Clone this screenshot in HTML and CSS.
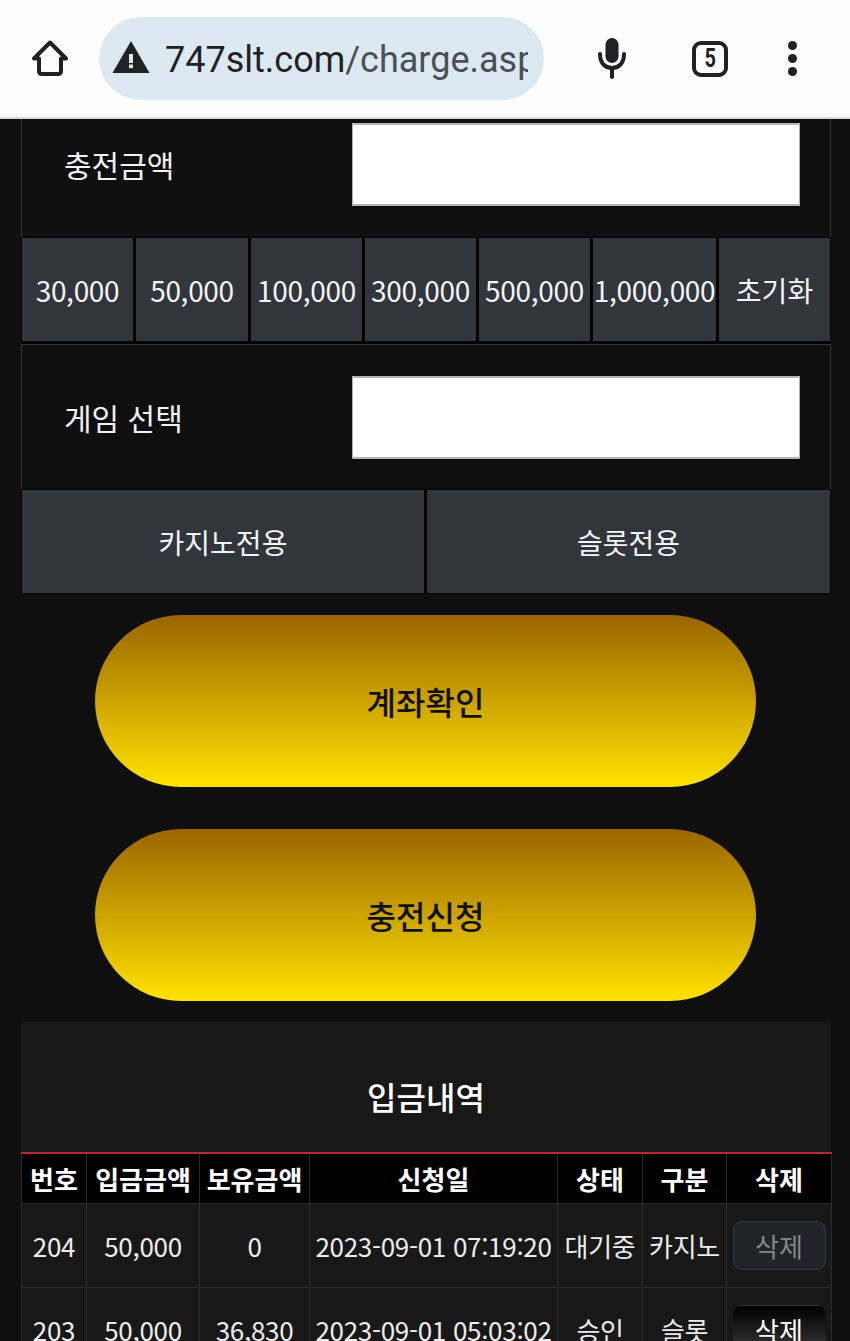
FILE: index.html
```html
<!DOCTYPE html>
<html lang="ko">
<head>
    <meta charset="utf-8">
    <title>747slt.com/charge.asp</title>
    <link rel="stylesheet" href="styles.css">
</head>
<body>
    <header class="toolbar">
        <svg class="icon-home" width="38" height="37" viewBox="0 0 38 37">
            <path d="M8 18.5 H3 L19 2.5 L35 18.5 H30 V31 Q30 34 27 34 H11 Q8 34 8 31 Z" fill="none" stroke="#202124" stroke-width="4" stroke-linejoin="round"/>
        </svg>
        <div class="omnibox">
            <svg class="icon-warn" width="38" height="32" viewBox="0 0 38 32">
                <path d="M19 0 L37.5 32 H0.5 Z" fill="#202124"/>
                <rect x="17" y="13" width="4" height="9" fill="#dce9f1"/>
                <rect x="17" y="23.5" width="4" height="3.6" fill="#dce9f1"/>
            </svg>
            <div class="url"><span class="url-host">747slt.com</span>/charge.aspx</div>
        </div>
        <svg class="icon-mic" width="28" height="41" viewBox="0 0 28 41">
            <rect x="7.5" y="0" width="13" height="25" rx="6.5" fill="#202124"/>
            <path d="M2 16 C2 26 8 30 14 30 C20 30 26 26 26 16" fill="none" stroke="#202124" stroke-width="4" stroke-linecap="round"/>
            <rect x="12" y="29" width="4" height="12" rx="2" fill="#202124"/>
        </svg>
        <div class="tabs"><span class="tabs-num">5</span></div>
        <div class="dots"><i></i><i></i><i></i></div>
    </header>

    <form class="charge">
        <div class="field field-first">
            <label class="field-label">충전금액</label>
            <input class="field-input" type="text">
        </div>
        <div class="amounts">
            <button type="button" class="pick pick-num">30,000</button>
            <button type="button" class="pick pick-num">50,000</button>
            <button type="button" class="pick pick-num">100,000</button>
            <button type="button" class="pick pick-num">300,000</button>
            <button type="button" class="pick pick-num">500,000</button>
            <button type="button" class="pick pick-num">1,000,000</button>
            <button type="button" class="pick">초기화</button>
        </div>
        <div class="field">
            <label class="field-label">게임 선택</label>
            <input class="field-input" type="text">
        </div>
        <div class="games">
            <button type="button" class="pick">카지노전용</button>
            <button type="button" class="pick">슬롯전용</button>
        </div>
        <button type="button" class="gold">계좌확인</button>
        <button type="button" class="gold">충전신청</button>
    </form>

    <section class="history">
        <h2 class="history-title">입금내역</h2>
        <table class="history-table">
            <colgroup>
                <col class="c-no"><col class="c-amount"><col class="c-balance"><col class="c-date"><col class="c-state"><col class="c-type"><col class="c-del">
            </colgroup>
            <thead>
                <tr><th>번호</th><th>입금금액</th><th>보유금액</th><th>신청일</th><th>상태</th><th>구분</th><th>삭제</th></tr>
            </thead>
            <tbody>
                <tr>
                    <td>204</td><td>50,000</td><td>0</td><td>2023-09-01 07:19:20</td><td>대기중</td><td>카지노</td>
                    <td><button type="button" class="del del-off">삭제</button></td>
                </tr>
                <tr>
                    <td>203</td><td>50,000</td><td>36,830</td><td>2023-09-01 05:03:02</td><td>승인</td><td>슬롯</td>
                    <td><button type="button" class="del">삭제</button></td>
                </tr>
            </tbody>
        </table>
    </section>
</body>
</html>
```

FILE: styles.css
```css
* {
    box-sizing: border-box;
}

html, body {
    height: 100%;
}

body {
    margin: 0;
    height: 1341px;
    overflow: hidden;
    background: #0f0f10;
    color: #fff;
    font-family: "Noto Sans CJK KR", "Noto Sans", sans-serif;
}

/* browser bar */
.toolbar {
    display: flex;
    align-items: center;
    height: 119px;
    background: #fdfdfe;
    border-bottom: 2px solid #d9d9db;
}

.icon-home {
    flex: none;
    margin-left: 31px;
}

.omnibox {
    flex: none;
    display: flex;
    align-items: center;
    width: 445px;
    height: 83px;
    margin-left: 30px;
    padding: 0 16px 0 13px;
    border-radius: 42px;
    background: #dce9f1;
}

.icon-warn {
    flex: none;
    margin-bottom: 3px;
}

.url {
    margin-left: 15px;
    padding-top: 2px;
    overflow: hidden;
    white-space: nowrap;
    font-family: Roboto, sans-serif;
    font-size: 36px;
    color: #4a4f55;
}

.url-host {
    color: #202124;
}

.icon-mic {
    flex: none;
    margin-left: 54px;
}

.tabs {
    flex: none;
    width: 36px;
    height: 36px;
    margin-left: 66px;
    border: 4px solid #202124;
    border-radius: 9px;
    text-align: center;
    line-height: 27px;
    font-family: Roboto, sans-serif;
    font-size: 25px;
    font-weight: 700;
    color: #202124;
}

.tabs-num {
    display: inline-block;
    transform: scaleX(0.8);
}

.dots {
    flex: none;
    display: flex;
    flex-direction: column;
    gap: 4px;
    margin-left: 60px;
}

.dots i {
    display: block;
    width: 9px;
    height: 9px;
    border-radius: 50%;
    background: #202124;
}

/* charge form */
.charge {
    margin: 0 19px 0 21px;
}

.field {
    display: flex;
    align-items: center;
    height: 145px;
    padding: 31px 30px 30px 42px;
    border: 1px solid #333;
    border-bottom: none;
}

.field-first {
    height: 118px;
    padding-top: 4px;
    padding-bottom: 31px;
    border-top: none;
}

.field-label {
    flex: none;
    width: 288px;
    margin-bottom: 2px;
    font-size: 30px;
    color: #f2f2f2;
}

.field-input {
    width: 448px;
    height: 83px;
    border: 1px solid #b4b4b4;
    border-top-width: 2px;
    border-bottom-width: 2px;
    background: #fff;
}

.amounts, .games {
    display: grid;
    gap: 3px;
    padding: 1px;
    background: #000;
}

.amounts {
    grid-template-columns: 111px 112px 111px 111px 111px 123px 111px;
    height: 107px;
    padding-bottom: 3px;
}

.games {
    grid-template-columns: 402px 403px;
    height: 105px;
}

.pick {
    padding: 0;
    border: none;
    background: #31353c;
    color: #f4f4f4;
    font-family: inherit;
    font-size: 28px;
    white-space: nowrap;
}

.pick-num {
    letter-spacing: -0.3px;
}

.gold {
    display: block;
    width: 661px;
    height: 172px;
    margin: 21px 0 0 74px;
    border: none;
    border-radius: 86px;
    background: linear-gradient(to bottom, #9a6500, #ffe200);
    color: #111;
    font-family: inherit;
    font-size: 32px;
    font-weight: 500;
}

.gold + .gold {
    margin-top: 42px;
}

/* deposit history */
.history {
    margin: 21px 19px 0 21px;
    background: #181818;
}

.history-title {
    margin: 0;
    height: 130px;
    padding-top: 47px;
    text-align: center;
    line-height: 54px;
    font-size: 32px;
    font-weight: 500;
    color: #fff;
}

.history-table {
    width: 810px;
    table-layout: fixed;
    border-collapse: collapse;
    border-top: 2px solid #b8282d;
}

.c-no { width: 65px; }
.c-amount { width: 113px; }
.c-balance { width: 110px; }
.c-date { width: 248px; }
.c-state { width: 85px; }
.c-type { width: 84px; }
.c-del { width: 105px; }

.history-table th, .history-table td {
    padding: 0;
    border: 1px solid #2b2b2b;
    text-align: center;
    white-space: nowrap;
}

.history-table th {
    height: 50px;
    background: #000;
    font-size: 26px;
    font-weight: 700;
}

.history-table td {
    height: 84px;
    font-size: 26px;
    letter-spacing: -0.3px;
    color: #ececec;
}

.del {
    display: block;
    width: 93px;
    height: 49px;
    margin: 0 auto;
    padding: 0;
    border: 1px solid transparent;
    border-radius: 9px;
    background: linear-gradient(to bottom, #000, #3a3a3a);
    color: #fff;
    font-family: inherit;
    font-size: 26px;
}

.del-off {
    border-color: #2c3a4e;
    background: #222328;
    color: #85868a;
}
```
